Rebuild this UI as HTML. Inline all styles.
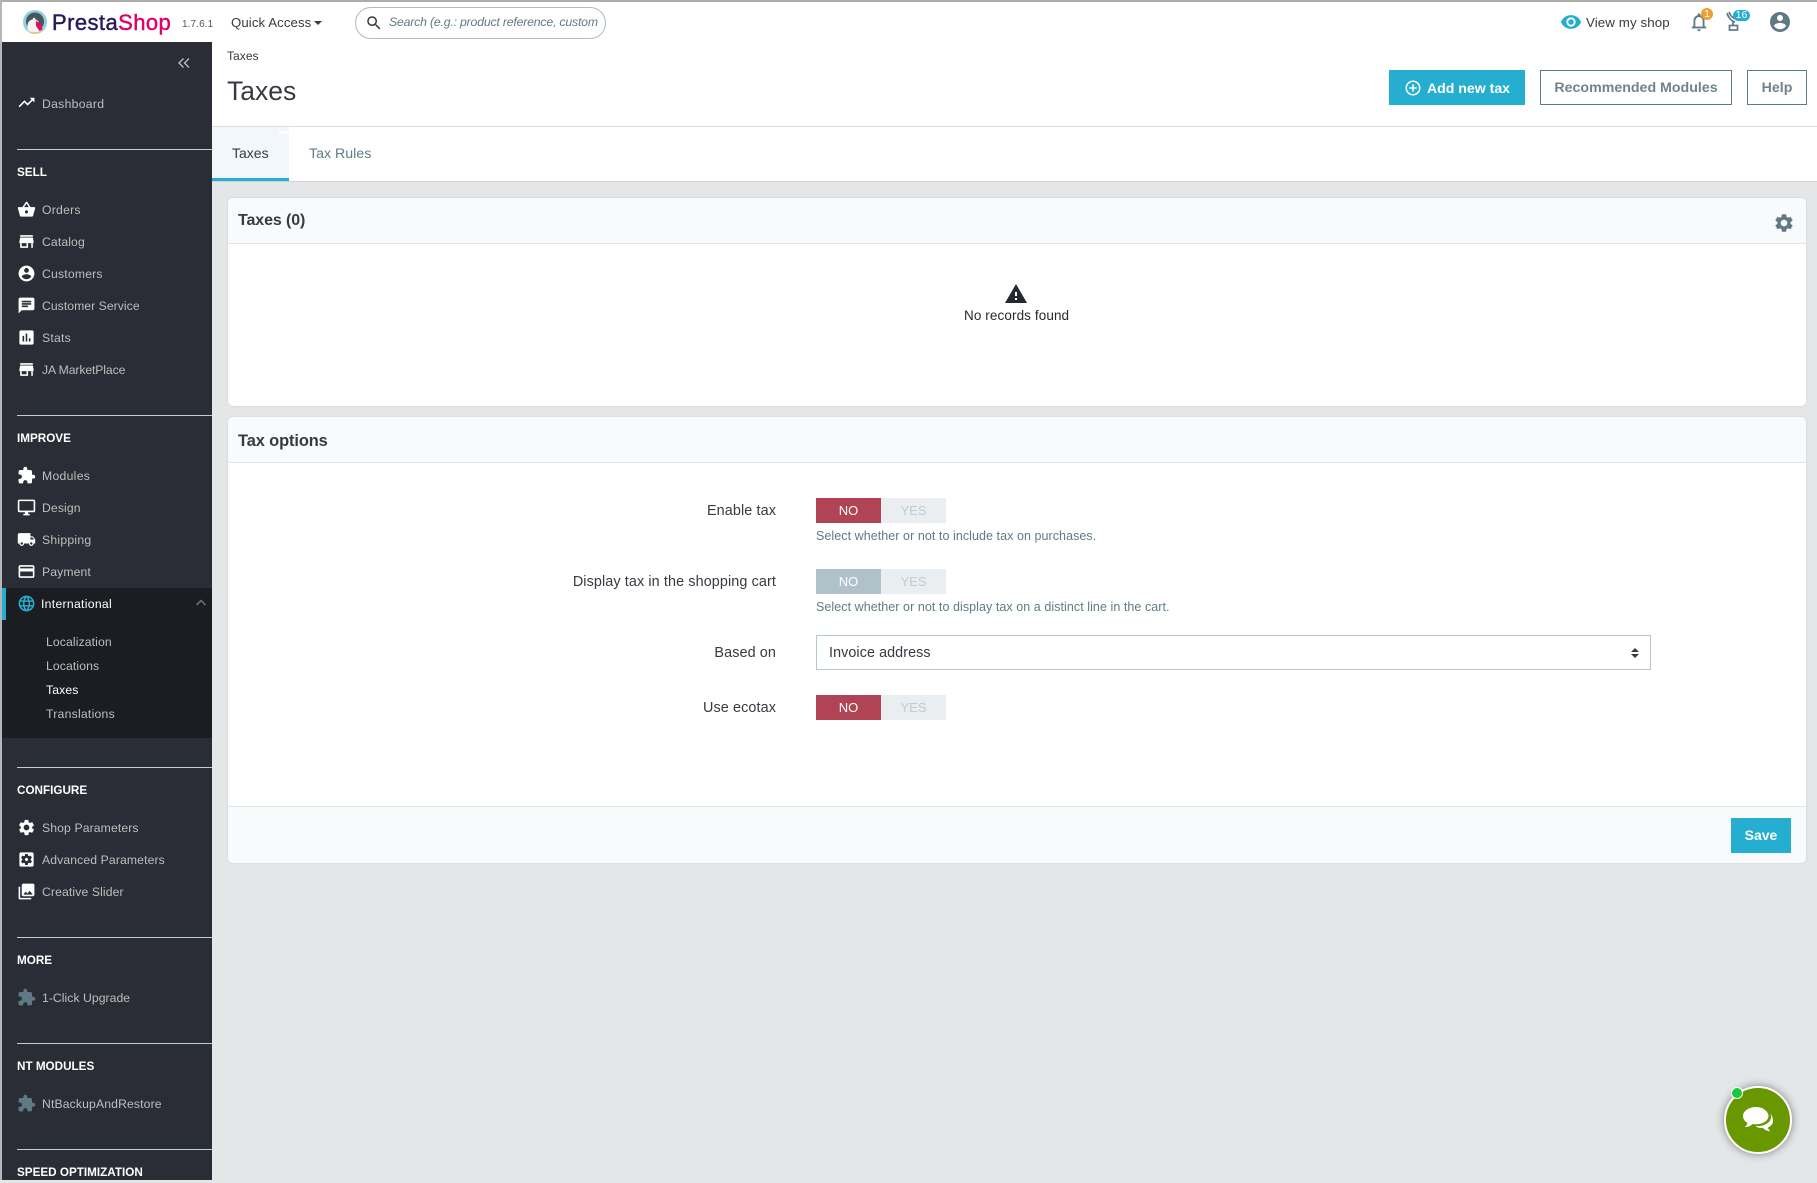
<!DOCTYPE html>
<html lang="en"><head><meta charset="utf-8"><title>Taxes</title>
<style>
*{box-sizing:border-box}
html,body{margin:0;padding:0;width:1817px;height:1180px;overflow:hidden;background:#e4e6e8;font-family:"Liberation Sans",sans-serif;color:#363a41}
.a{position:absolute}
.t{position:absolute;white-space:nowrap;line-height:20px;height:20px}
svg.i{position:absolute;display:block}
.side{left:2px;top:42px;width:210px;height:1138px;background:#2a2d35;overflow:hidden}
.n{color:#bebebe;font-size:12.2px;letter-spacing:.12px;left:42px;margin-top:1px}
.h{color:#fff;font-size:11.7px;font-weight:700;left:17px;margin-top:1px}
.s{color:#bebebe;font-size:12.2px;letter-spacing:.12px;left:46px}
.sep{position:absolute;left:17px;width:195px;height:1px;background:#bccdd4}
.lab{font-size:14.4px;letter-spacing:.1px;right:1041px;color:#363a41}
.help{font-size:12.5px;left:816px;color:#5f7c85;letter-spacing:.06px}
.sw{position:absolute;left:816px;width:130px;height:25px;background:#ebeef0;font-size:13px;line-height:25px;text-align:center}
.sw b{position:absolute;left:0;top:0;width:65px;height:25px;background:#b04455;color:#fff;font-weight:400}
.sw i{position:absolute;left:65px;top:0;width:65px;height:25px;color:#bdcdd2;font-style:normal}
.btn{position:absolute;top:70px;height:35px;font-size:14.2px;font-weight:700;line-height:34px;text-align:center;border:1px solid #5f7a84;color:#6c868e;background:#fff}
.panel{position:absolute;left:228px;width:1578px;background:#fff;border-radius:5px;box-shadow:0 0 2px rgba(0,0,0,.12)}
.ph{position:absolute;left:0;top:0;width:100%;height:46px;background:#f8fafb;border-bottom:1px solid #dbe6e9;border-radius:5px 5px 0 0}
</style></head><body>
<svg width="0" height="0" style="position:absolute"><defs>
<symbol id="trend" viewBox="0 0 24 24"><path d="M16 6l2.29 2.29-4.88 4.88-4-4L2 16.59 3.41 18l6-6 4 4 6.3-6.29L22 12V6z"/></symbol>
<symbol id="basket" viewBox="0 0 24 24"><path d="M17.21 9l-4.38-6.56c-.19-.28-.51-.42-.83-.42-.32 0-.64.14-.83.43L6.79 9H2c-.55 0-1 .45-1 1 0 .09.01.18.04.27l2.54 9.27c.23.84 1 1.46 1.92 1.46h13c.92 0 1.69-.62 1.93-1.46l2.54-9.27L23 10c0-.55-.45-1-1-1h-4.79zM9 9l3-4.4L15 9H9zm3 8c-1.1 0-2-.9-2-2s.9-2 2-2 2 .9 2 2-.9 2-2 2z"/></symbol>
<symbol id="store" viewBox="0 0 24 24"><path d="M20 4H4v2h16V4zm1 10v-2l-1-5H4l-1 5v2h1v6h10v-6h4v6h2v-6h1zm-9 4H6v-4h6v4z"/></symbol>
<symbol id="acct" viewBox="0 0 24 24"><path d="M12 2C6.48 2 2 6.48 2 12s4.48 10 10 10 10-4.48 10-10S17.52 2 12 2zm0 3c1.66 0 3 1.34 3 3s-1.34 3-3 3-3-1.34-3-3 1.34-3 3-3zm0 14.2c-2.5 0-4.71-1.28-6-3.22.03-1.99 4-3.08 6-3.08 1.99 0 5.97 1.09 6 3.08-1.29 1.94-3.5 3.22-6 3.22z"/></symbol>
<symbol id="chat" viewBox="0 0 24 24"><path d="M20 2H4c-1.1 0-1.99.9-1.99 2L2 22l4-4h14c1.1 0 2-.9 2-2V4c0-1.1-.9-2-2-2zM6 9h12v2H6V9zm8 5H6v-2h8v2zm4-6H6V6h12v2z"/></symbol>
<symbol id="stats" viewBox="0 0 24 24"><path d="M19 3H5c-1.1 0-2 .9-2 2v14c0 1.1.9 2 2 2h14c1.1 0 2-.9 2-2V5c0-1.1-.9-2-2-2zM9 17H7v-7h2v7zm4 0h-2V7h2v10zm4 0h-2v-4h2v4z"/></symbol>
<symbol id="ext" viewBox="0 0 24 24"><path d="M20.5 11H19V7c0-1.1-.9-2-2-2h-4V3.5C13 2.12 11.88 1 10.5 1S8 2.12 8 3.5V5H4c-1.1 0-1.99.9-1.99 2v3.8H3.5c1.49 0 2.7 1.21 2.7 2.7s-1.21 2.7-2.7 2.7H2V20c0 1.1.9 2 2 2h3.8v-1.5c0-1.49 1.21-2.7 2.7-2.7 1.49 0 2.7 1.21 2.7 2.7V22H17c1.1 0 2-.9 2-2v-4h1.5c1.38 0 2.5-1.12 2.5-2.5S21.88 11 20.5 11z"/></symbol>
<symbol id="desk" viewBox="0 0 24 24"><path d="M21 2H3c-1.1 0-2 .9-2 2v12c0 1.1.9 2 2 2h7v2H8v2h8v-2h-2v-2h7c1.1 0 2-.9 2-2V4c0-1.1-.9-2-2-2zm0 14H3V4h18v12z"/></symbol>
<symbol id="ship" viewBox="0 0 24 24"><path d="M20 8h-3V4H3c-1.1 0-2 .9-2 2v11h2c0 1.66 1.34 3 3 3s3-1.34 3-3h6c0 1.66 1.34 3 3 3s3-1.34 3-3h2v-5l-3-4zM6 18.5c-.83 0-1.5-.67-1.5-1.5s.67-1.5 1.5-1.5 1.5.67 1.5 1.5-.67 1.5-1.5 1.5zm13.5-9l1.96 2.5H17V9.5h2.5zm-1.5 9c-.83 0-1.5-.67-1.5-1.5s.67-1.5 1.5-1.5 1.5.67 1.5 1.5-.67 1.5-1.5 1.5z"/></symbol>
<symbol id="pay" viewBox="0 0 24 24"><path d="M20 4H4c-1.11 0-1.99.89-1.99 2L2 18c0 1.11.89 2 2 2h16c1.11 0 2-.89 2-2V6c0-1.11-.89-2-2-2zm0 14H4v-6h16v6zm0-10H4V6h16v2z"/></symbol>
<symbol id="lang" viewBox="0 0 24 24"><path d="M11.99 2C6.47 2 2 6.48 2 12s4.47 10 9.99 10C17.52 22 22 17.52 22 12S17.52 2 11.99 2zm6.93 6h-2.95c-.32-1.25-.78-2.45-1.38-3.56 1.84.63 3.37 1.91 4.33 3.56zM12 4.04c.83 1.2 1.48 2.53 1.91 3.96h-3.82c.43-1.43 1.08-2.76 1.91-3.96zM4.26 14C4.1 13.36 4 12.69 4 12s.1-1.36.26-2h3.38c-.08.66-.14 1.32-.14 2 0 .68.06 1.34.14 2H4.26zm.82 2h2.95c.32 1.25.78 2.45 1.38 3.56-1.84-.63-3.37-1.9-4.33-3.56zm2.95-8H5.08c.96-1.66 2.49-2.93 4.33-3.56C8.81 5.55 8.35 6.75 8.03 8zM12 19.96c-.83-1.2-1.48-2.53-1.91-3.96h3.82c-.43 1.43-1.08 2.76-1.91 3.96zM14.34 14H9.66c-.09-.66-.16-1.32-.16-2 0-.68.07-1.35.16-2h4.68c.09.65.16 1.32.16 2 0 .68-.07 1.34-.16 2zm.25 5.56c.6-1.11 1.06-2.31 1.38-3.56h2.95c-.96 1.65-2.49 2.93-4.33 3.56zM16.36 14c.08-.66.14-1.32.14-2 0-.68-.06-1.34-.14-2h3.38c.16.64.26 1.31.26 2s-.1 1.36-.26 2h-3.38z"/></symbol>
<symbol id="gear" viewBox="0 0 24 24"><path d="M19.14 12.94c.04-.3.06-.61.06-.94 0-.32-.02-.64-.07-.94l2.03-1.58c.18-.14.23-.41.12-.61l-1.92-3.32c-.12-.22-.37-.29-.59-.22l-2.39.96c-.5-.38-1.03-.7-1.62-.94l-.36-2.54c-.04-.24-.24-.41-.48-.41h-3.84c-.24 0-.43.17-.47.41l-.36 2.54c-.59.24-1.13.57-1.62.94l-2.39-.96c-.22-.08-.47 0-.59.22L2.74 8.87c-.12.21-.08.47.12.61l2.03 1.58c-.05.3-.09.63-.09.94s.02.64.07.94l-2.03 1.58c-.18.14-.23.41-.12.61l1.92 3.32c.12.22.37.29.59.22l2.39-.96c.5.38 1.03.7 1.62.94l.36 2.54c.05.24.24.41.48.41h3.84c.24 0 .44-.17.47-.41l.36-2.54c.59-.24 1.13-.56 1.62-.94l2.39.96c.22.08.47 0 .59-.22l1.92-3.32c.12-.22.07-.47-.12-.61l-2.01-1.58zM12 15.6c-1.98 0-3.6-1.62-3.6-3.6s1.62-3.6 3.6-3.6 3.6 1.62 3.6 3.6-1.62 3.6-3.6 3.6z"/></symbol>
<symbol id="gearbox" viewBox="0 0 24 24"><path d="M12 10c-1.1 0-2 .9-2 2s.9 2 2 2 2-.9 2-2-.9-2-2-2zm7-7H5c-1.11 0-2 .9-2 2v14c0 1.1.89 2 2 2h14c1.11 0 2-.9 2-2V5c0-1.1-.89-2-2-2zm-1.75 9c0 .23-.02.46-.05.68l1.48 1.16c.13.11.17.3.08.45l-1.4 2.42c-.09.15-.27.21-.43.15l-1.74-.7c-.36.28-.76.51-1.18.69l-.26 1.85c-.03.17-.18.3-.35.3h-2.8c-.17 0-.32-.13-.35-.29l-.26-1.85c-.43-.18-.82-.41-1.18-.69l-1.74.7c-.16.06-.34 0-.43-.15l-1.4-2.42c-.09-.15-.05-.34.08-.45l1.48-1.16c-.03-.23-.05-.46-.05-.69 0-.23.02-.46.05-.68l-1.48-1.16c-.13-.11-.17-.3-.08-.45l1.4-2.42c.09-.15.27-.21.43-.15l1.74.7c.36-.28.76-.51 1.18-.69l.26-1.85c.03-.17.18-.3.35-.3h2.8c.17 0 .32.13.35.29l.26 1.85c.43.18.82.41 1.18.69l1.74-.7c.16-.06.34 0 .43.15l1.4 2.42c.09.15.05.34-.08.45l-1.48 1.16c.03.23.05.46.05.69z"/></symbol>
<symbol id="photo" viewBox="0 0 24 24"><path d="M22 16V4c0-1.1-.9-2-2-2H8c-1.1 0-2 .9-2 2v12c0 1.1.9 2 2 2h12c1.1 0 2-.9 2-2zm-11-4l2.03 2.71L16 11l4 5H8l3-4zM2 6v14c0 1.1.9 2 2 2h14v-2H4V6H2z"/></symbol>
</defs></svg>

<!-- top chrome -->
<div class="a" style="left:0;top:0;width:1817px;height:127px;background:#fff"></div>
<div class="a" style="left:0;top:0;width:1817px;height:2px;background:#adadad"></div>
<div class="a" style="left:0;top:0;width:2px;height:1180px;background:#b4b6b8"></div>

<!-- logo -->
<svg class="i" style="left:23px;top:10px" width="24" height="24" viewBox="0 0 24 24">
<circle cx="12" cy="12" r="12" fill="#8fd0df"/><circle cx="12" cy="11.500" r="9" fill="#4a5560"/>
<path d="M5 21c-1-5-1-10 4-11.500 4-1 6 1 7 3l3 7c-3 3-10 4-14 1.500z" fill="#f4f4f4"/>
<path d="M13 11l5 2.500 1.500 6-3 1.500-3.500-5z" fill="#df1165"/><circle cx="11" cy="9" r="1.200" fill="#fff"/>
<path d="M4 20c4 3 12 3 16 0l-1 2-6 2-6-1z" fill="#e9c66f"/></svg>
<div class="t" style="left:52px;top:11px;font-size:22px;letter-spacing:.42px;-webkit-text-stroke:.45px;color:#251b5b;height:24px;line-height:24px">Presta<span style="color:#df0067;-webkit-text-stroke-color:#df0067">Shop</span></div>
<div class="t" style="left:182px;top:15px;font-size:10px;letter-spacing:.1px;color:#555">1.7.6.1</div>
<div class="t" style="left:231px;top:13px;font-size:13.2px;letter-spacing:.1px;color:#363a41">Quick Access</div>
<div class="a" style="left:314px;top:21px;border:4px solid transparent;border-top:4.5px solid #363a41;border-bottom:0"></div>
<div class="a" style="left:355px;top:7px;width:251px;height:32px;border:1px solid #a9bdc5;border-radius:16px;background:#fff"></div>
<svg class="i" style="left:365px;top:14px" width="18" height="18" viewBox="0 0 24 24" fill="#363a41"><path d="M15.5 14h-.79l-.28-.27C15.41 12.59 16 11.11 16 9.5 16 5.91 13.09 3 9.5 3S3 5.91 3 9.5 5.91 16 9.5 16c1.61 0 3.09-.59 4.23-1.57l.27.28v.79l5 4.99L20.49 19l-4.99-5zm-6 0C7.01 14 5 11.99 5 9.5S7.01 5 9.5 5 14 7.01 14 9.5 11.99 14 9.5 14z"/></svg>
<div class="t" style="left:389px;top:12px;width:209px;overflow:hidden;font-size:12.3px;letter-spacing:-.2px;font-style:italic;color:#5f7a84">Search (e.g.: product reference, customer name…)</div>

<svg class="i" style="left:1560px;top:11px" width="22" height="22" viewBox="0 0 24 24" fill="#25aed0"><path d="M12 4.5C7 4.5 2.73 7.61 1 12c1.730 4.390 6 7.500 11 7.500s9.270-3.110 11-7.500c-1.730-4.390-6-7.500-11-7.500zM12 17c-2.760 0-5-2.240-5-5s2.240-5 5-5 5 2.240 5 5-2.240 5-5 5zm0-8c-1.660 0-3 1.340-3 3s1.340 3 3 3 3-1.340 3-3-1.340-3-3-3z"/></svg>
<div class="t" style="left:1586px;top:13px;font-size:13.3px;letter-spacing:.1px;color:#363a41">View my shop</div>
<svg class="i" style="left:1688px;top:11px" width="22" height="22" viewBox="0 0 24 24" fill="#5f7a84"><path d="M12 22c1.1 0 2-.9 2-2h-4c0 1.1.9 2 2 2zm6-6v-5c0-3.07-1.63-5.64-4.5-6.32V4c0-.83-.67-1.5-1.5-1.5s-1.5.67-1.5 1.5v.68C7.64 5.36 6 7.92 6 11v5l-2 2v1h16v-1l-2-2zm-2 1H8v-6c0-2.48 1.51-4.5 4-4.5s4 2.02 4 4.5v6z"/></svg>
<div class="a" style="left:1701px;top:8px;width:12px;height:12px;border-radius:50%;background:#f0a030;color:#fff;font-size:10.5px;line-height:12px;text-align:center">1</div>
<svg class="i" style="left:1725px;top:10px" width="18" height="22" viewBox="0 0 18 22" fill="none" stroke="#5f7a84" stroke-width="1.7"><path d="M2 3c1 4 4 8 8 9"/><path d="M4 2c1 3 3 6 7 7"/><path d="M8 12v3"/><rect x="4.5" y="15.5" width="8" height="4.5"/></svg>
<div class="a" style="left:1733px;top:10px;width:17px;height:11px;border-radius:6px;background:#25aed0;color:#fff;font-size:10.5px;line-height:11px;text-align:center">16</div>
<svg class="i" style="left:1768px;top:10px" width="24" height="24" fill="#5f7a84"><use href="#acct"/></svg>

<!-- page head -->
<div class="t" style="left:227px;top:46px;font-size:12.1px;color:#363a41">Taxes</div>
<div class="t" style="left:227px;top:76px;font-size:26.500px;height:30px;line-height:30px;color:#363a41">Taxes</div>
<div class="a" style="left:1389px;top:70px;width:136px;height:35px;background:#25aed0"></div>
<svg class="i" style="left:1404px;top:79px" width="18" height="18" viewBox="0 0 24 24" fill="#fff"><path d="M13 7h-2v4H7v2h4v4h2v-4h4v-2h-4V7zm-1-5C6.48 2 2 6.48 2 12s4.48 10 10 10 10-4.48 10-10S17.52 2 12 2zm0 18c-4.41 0-8-3.59-8-8s3.59-8 8-8 8 3.59 8 8-3.59 8-8 8z"/></svg>
<div class="t" style="left:1427px;top:78px;font-size:14.1px;font-weight:700;color:#fff">Add new tax</div>
<div class="btn" style="left:1540px;width:192px">Recommended Modules</div>
<div class="btn" style="left:1747px;width:60px">Help</div>

<div class="a" style="left:212px;top:126px;width:1605px;height:1px;background:#dcdcdc"></div>
<div class="a" style="left:212px;top:127px;width:1605px;height:54px;background:#fff"></div>
<div class="a" style="left:212px;top:127px;width:77px;height:54px;background:#f2f7fb;border-bottom:3px solid #25aed0"></div>
<div class="a" style="left:279px;top:131px;width:10px;height:3px;background:#fff"></div>
<div class="t" style="left:232px;top:143px;font-size:14px;color:#363a41">Taxes</div>
<div class="t" style="left:309px;top:144px;font-size:14.2px;color:#5f7c85">Tax Rules</div>
<div class="a" style="left:289px;top:181px;width:1528px;height:1px;background:#cfd2d4"></div>
<div class="a" style="left:212px;top:181px;width:77px;height:1px;background:#cfd2d4"></div>

<!-- panel 1 -->
<div class="panel" style="top:198px;height:208px"><div class="ph"></div></div>
<div class="t" style="left:238px;top:211px;font-size:16px;font-weight:700;color:#363a41;letter-spacing:-.1px">Taxes (0)</div>
<svg class="i" style="left:1773px;top:212px" width="22" height="22" fill="#5f7a84"><use href="#gear"/></svg>
<svg class="i" style="left:1004px;top:282px" width="24" height="24" viewBox="0 0 24 24" fill="#25282e"><path d="M1 21h22L12 2 1 21zm12-3h-2v-2h2v2zm0-4h-2v-4h2v4z"/></svg>
<div class="t" style="left:964px;top:306px;font-size:13.5px;letter-spacing:.1px;color:#25282e">No records found</div>

<!-- panel 2 -->
<div class="panel" style="top:417px;height:446px"><div class="ph"></div><div class="a" style="left:0;top:389px;width:100%;height:57px;background:#f8fafb;border-top:1px solid #dbe6e9;border-radius:0 0 5px 5px"></div></div>
<div class="t" style="left:238px;top:431px;font-size:16.4px;font-weight:700;color:#363a41;letter-spacing:-.1px">Tax options</div>

<div class="t lab" style="top:501px">Enable tax</div>
<div class="sw" style="top:498px"><b>NO</b><i>YES</i></div>
<div class="t help" style="top:526px">Select whether or not to include tax on purchases.</div>
<div class="t lab" style="top:572px">Display tax in the shopping cart</div>
<div class="sw" style="top:569px"><b style="background:#afc2c9">NO</b><i>YES</i></div>
<div class="t help" style="top:597px">Select whether or not to display tax on a distinct line in the cart.</div>
<div class="t lab" style="top:643px">Based on</div>
<div class="a" style="left:816px;top:635px;width:835px;height:35px;border:1px solid #b3c7cf;background:#fff"></div>
<div class="t" style="left:829px;top:643px;font-size:14.3px;letter-spacing:.1px;color:#363a41">Invoice address</div>
<div class="a" style="left:1631px;top:648px;border:4px solid transparent;border-bottom:4px solid #363a41;border-top:0"></div>
<div class="a" style="left:1631px;top:654px;border:4px solid transparent;border-top:4px solid #363a41;border-bottom:0"></div>
<div class="t lab" style="top:698px">Use ecotax</div>
<div class="sw" style="top:695px"><b>NO</b><i>YES</i></div>

<div class="a" style="left:1731px;top:818px;width:60px;height:35px;background:#25aed0;color:#fff;font-size:14px;font-weight:700;line-height:35px;text-align:center">Save</div>

<!-- sidebar -->
<div class="a side"></div>
<div class="a" style="left:2px;top:588px;width:210px;height:150px;background:#1b1d22"></div>
<div class="a" style="left:2px;top:588px;width:4px;height:32px;background:#25aed0"></div>
<svg class="i" style="left:175px;top:54px" width="18" height="18" viewBox="0 0 18 18" fill="none" stroke="#bebebe" stroke-width="1.3"><path d="M8.5 4.5 4 9l4.5 4.5M14 4.5 9.500 9l4.500 4.500"/></svg>

<svg class="i" style="left:17px;top:93px" width="19" height="19" fill="#fff"><use href="#trend"/></svg><div class="t n" style="top:93px;letter-spacing:.3px">Dashboard</div>
<div class="sep" style="top:149px"></div>
<div class="t h" style="top:162px">SELL</div>
<svg class="i" style="left:17px;top:200px" width="19" height="19" fill="#fff"><use href="#basket"/></svg><div class="t n" style="top:199px;letter-spacing:.25px">Orders</div>
<svg class="i" style="left:17px;top:232px" width="19" height="19" fill="#fff"><use href="#store"/></svg><div class="t n" style="top:231px">Catalog</div>
<svg class="i" style="left:17px;top:264px" width="19" height="19" fill="#fff"><use href="#acct"/></svg><div class="t n" style="top:263px;letter-spacing:.2px">Customers</div>
<svg class="i" style="left:17px;top:296px" width="19" height="19" fill="#fff"><use href="#chat"/></svg><div class="t n" style="top:295px;letter-spacing:.05px">Customer Service</div>
<svg class="i" style="left:17px;top:328px" width="19" height="19" fill="#fff"><use href="#stats"/></svg><div class="t n" style="top:327px;letter-spacing:.25px">Stats</div>
<svg class="i" style="left:17px;top:360px" width="19" height="19" fill="#fff"><use href="#store"/></svg><div class="t n" style="top:359px;letter-spacing:-.1px">JA MarketPlace</div>
<div class="sep" style="top:415px"></div>
<div class="t h" style="top:428px">IMPROVE</div>
<svg class="i" style="left:17px;top:466px" width="19" height="19" fill="#fff"><use href="#ext"/></svg><div class="t n" style="top:465px;letter-spacing:.3px">Modules</div>
<svg class="i" style="left:17px;top:498px" width="19" height="19" fill="#fff"><use href="#desk"/></svg><div class="t n" style="top:497px">Design</div>
<svg class="i" style="left:17px;top:530px" width="19" height="19" fill="#fff"><use href="#ship"/></svg><div class="t n" style="top:529px;letter-spacing:.25px">Shipping</div>
<svg class="i" style="left:17px;top:562px" width="19" height="19" fill="#fff"><use href="#pay"/></svg><div class="t n" style="top:561px">Payment</div>
<svg class="i" style="left:17px;top:594px" width="19" height="19" fill="#25aed0"><use href="#lang"/></svg><div class="t n" style="top:593px;color:#fff;left:41px;letter-spacing:.3px">International</div>
<svg class="i" style="left:195px;top:598px" width="12" height="10" viewBox="0 0 12 10" fill="none" stroke="#5f7a84" stroke-width="1.5"><path d="M1.500 7 6 2.500 10.500 7"/></svg>
<div class="t s" style="top:632px">Localization</div>
<div class="t s" style="top:656px">Locations</div>
<div class="t s" style="top:680px;color:#fff">Taxes</div>
<div class="t s" style="top:704px;letter-spacing:.25px">Translations</div>
<div class="sep" style="top:767px"></div>
<div class="t h" style="top:780px">CONFIGURE</div>
<svg class="i" style="left:17px;top:818px" width="19" height="19" fill="#fff"><use href="#gear"/></svg><div class="t n" style="top:817px">Shop Parameters</div>
<svg class="i" style="left:17px;top:850px" width="19" height="19" fill="#fff"><use href="#gearbox"/></svg><div class="t n" style="top:849px">Advanced Parameters</div>
<svg class="i" style="left:17px;top:882px" width="19" height="19" fill="#fff"><use href="#photo"/></svg><div class="t n" style="top:881px">Creative Slider</div>
<div class="sep" style="top:937px"></div>
<div class="t h" style="top:950px">MORE</div>
<svg class="i" style="left:17px;top:988px" width="19" height="19" fill="#5f7a84"><use href="#ext"/></svg><div class="t n" style="top:987px;letter-spacing:.05px">1-Click Upgrade</div>
<div class="sep" style="top:1043px"></div>
<div class="t h" style="top:1056px">NT MODULES</div>
<svg class="i" style="left:17px;top:1094px" width="19" height="19" fill="#5f7a84"><use href="#ext"/></svg><div class="t n" style="top:1093px;letter-spacing:.14px">NtBackupAndRestore</div>
<div class="sep" style="top:1149px"></div>
<div class="t h" style="top:1162px">SPEED OPTIMIZATION</div>

<!-- chat -->
<div class="a" style="left:1724px;top:1086px;width:68px;height:68px;border-radius:50%;background:#689700;border:2px solid #fff;box-shadow:0 0 9px rgba(0,0,0,.45)"></div>
<svg class="i" style="left:1743px;top:1107px" width="33" height="26" viewBox="0 0 33 26" fill="#fff"><path d="M13 0C6 0 0 4 0 9c0 3 2 5.500 4.500 7-.3 1.500-1 3-3 4 3.500 0 6-1 8-3 1 .2 2.300.3 3.500.3 7 0 12.500-3.800 12.500-8.300S20 0 13 0z"/><path d="M27 6c1 1.500 1.300 3.200 1 5-1 5-7 8.300-13.500 8-1 0-1.500 0-2 .2 2 1.300 4.500 2 7.500 1.800 1.500 1.800 4 3 7.500 3.500-1.500-1-2.300-2.500-2.500-4 3-1.300 5-3.500 5-6.500 0-3.200-1.300-6-3-8z"/></svg>
<div class="a" style="left:1731px;top:1087px;width:12px;height:12px;border-radius:50%;background:#17c93c;border:1px solid #fff"></div>
</body></html>
